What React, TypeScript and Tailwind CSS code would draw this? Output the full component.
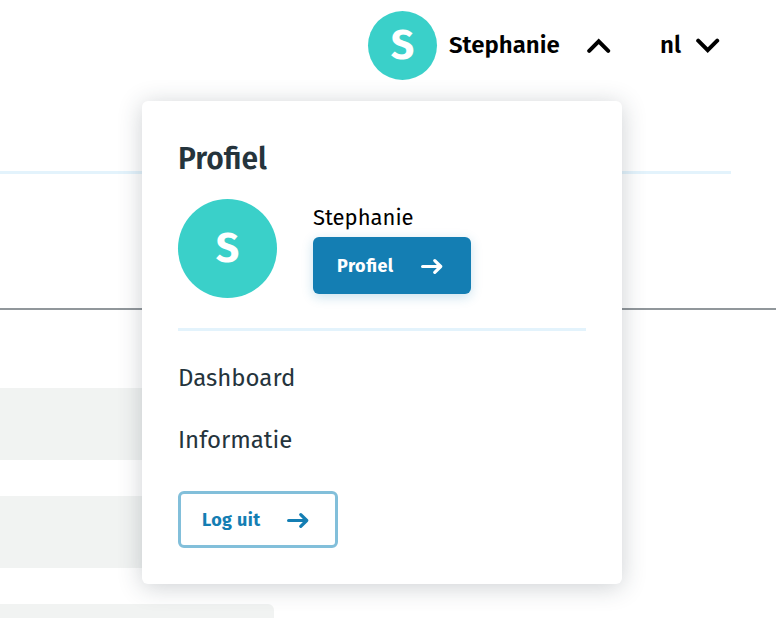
function Chevron({ up = false }: { up?: boolean }) {
  return (
    <svg width="24" height="16" viewBox="0 0 24 16" fill="none" stroke="currentColor" strokeWidth="4" strokeLinecap="round">
      <path d={up ? "M2.2 12.8 11.7 3.4l9.5 9.4" : "M2.2 2.7 11.7 12.1l9.5-9.4"} />
    </svg>
  );
}

function Arrow() {
  return (
    <svg width="22" height="16" viewBox="0 0 22 16" fill="none" stroke="currentColor" strokeWidth="3.2" strokeLinecap="round" strokeLinejoin="round">
      <path d="M1.6 8.5H19.4M13.8 2.6 19.7 8.5 13.8 14.4" />
    </svg>
  );
}

export default function App() {
  return (
    <div className="relative h-[618px] w-[780px] overflow-hidden bg-white font-['Fira_Sans','Noto_Sans',sans-serif] text-black">
      <header className="flex h-[171px] items-start pt-[11px] pl-[368px]">
        <button className="flex h-[69px] items-center">
          <span className="flex size-[69px] items-center justify-center rounded-full bg-[#3ad0c9] text-[41px] leading-none font-bold text-white">
            S
          </span>
          <span className="ml-3 w-[138px] pb-0.5 text-left text-2xl font-semibold">Stephanie</span>
          <Chevron up />
        </button>
        <button className="ml-[49px] flex h-[69px] items-center">
          <span className="w-[36px] pb-0.5 text-left text-2xl font-semibold">nl</span>
          <Chevron />
        </button>
      </header>
      <div className="h-[3px] w-[731px] bg-[#e3f3fc]" />
      <div className="mt-[134px] h-[2px] w-[776px] bg-[#91979b]" />
      <main className="mt-[78px] flex w-[274px] flex-col gap-9">
        <div className="h-[72px] rounded-r-md bg-[#f1f3f2]" />
        <div className="h-[72px] rounded-r-md bg-[#f1f3f2]" />
        <div className="h-[72px] rounded-r-md bg-[#f1f3f2]" />
      </main>

      <section className="absolute top-[101px] left-[142px] flex h-[483px] w-[480px] flex-col rounded-md bg-white px-9 pt-[37px] text-[#25343c] shadow-[0_3px_24px_rgba(37,52,65,0.23)]">
        <h2 className="text-[30px] leading-[42px] font-semibold">Profiel</h2>
        <div className="mt-[19px] flex h-[99px]">
          <div className="flex size-[99px] items-center justify-center rounded-full bg-[#3ad0c9] pb-px text-[41px] leading-none font-bold text-white">
            S
          </div>
          <div className="ml-9 flex flex-col pt-[3px]">
            <span className="h-[35px] text-[22px] leading-[32px] text-black">Stephanie</span>
            <button className="flex h-[57px] w-[158px] items-center rounded-md bg-[#147eb3] pl-6 text-white shadow-[0_3px_12px_rgba(20,126,179,0.23)]">
              <span className="w-[84px] pt-px text-left text-[18px] font-bold tracking-[0.5px] [font-feature-settings:'liga'_1]">Profiel</span>
              <Arrow />
            </button>
          </div>
        </div>
        <div className="mt-[30px] h-[3px] w-full bg-[#e3f3fc]" />
        <nav className="mt-[29px] flex flex-col gap-[26px] text-2xl leading-9">
          <a>Dashboard</a>
          <a>Informatie</a>
        </nav>
        <button className="mt-[33px] flex h-[57px] w-[160px] items-center rounded-md border-[3px] border-[#82bfda] pl-[21px] text-[#147eb3]">
          <span className="w-[85px] pt-px text-left text-[18px] font-bold tracking-[0.4px]">Log uit</span>
          <Arrow />
        </button>
      </section>
    </div>
  );
}
